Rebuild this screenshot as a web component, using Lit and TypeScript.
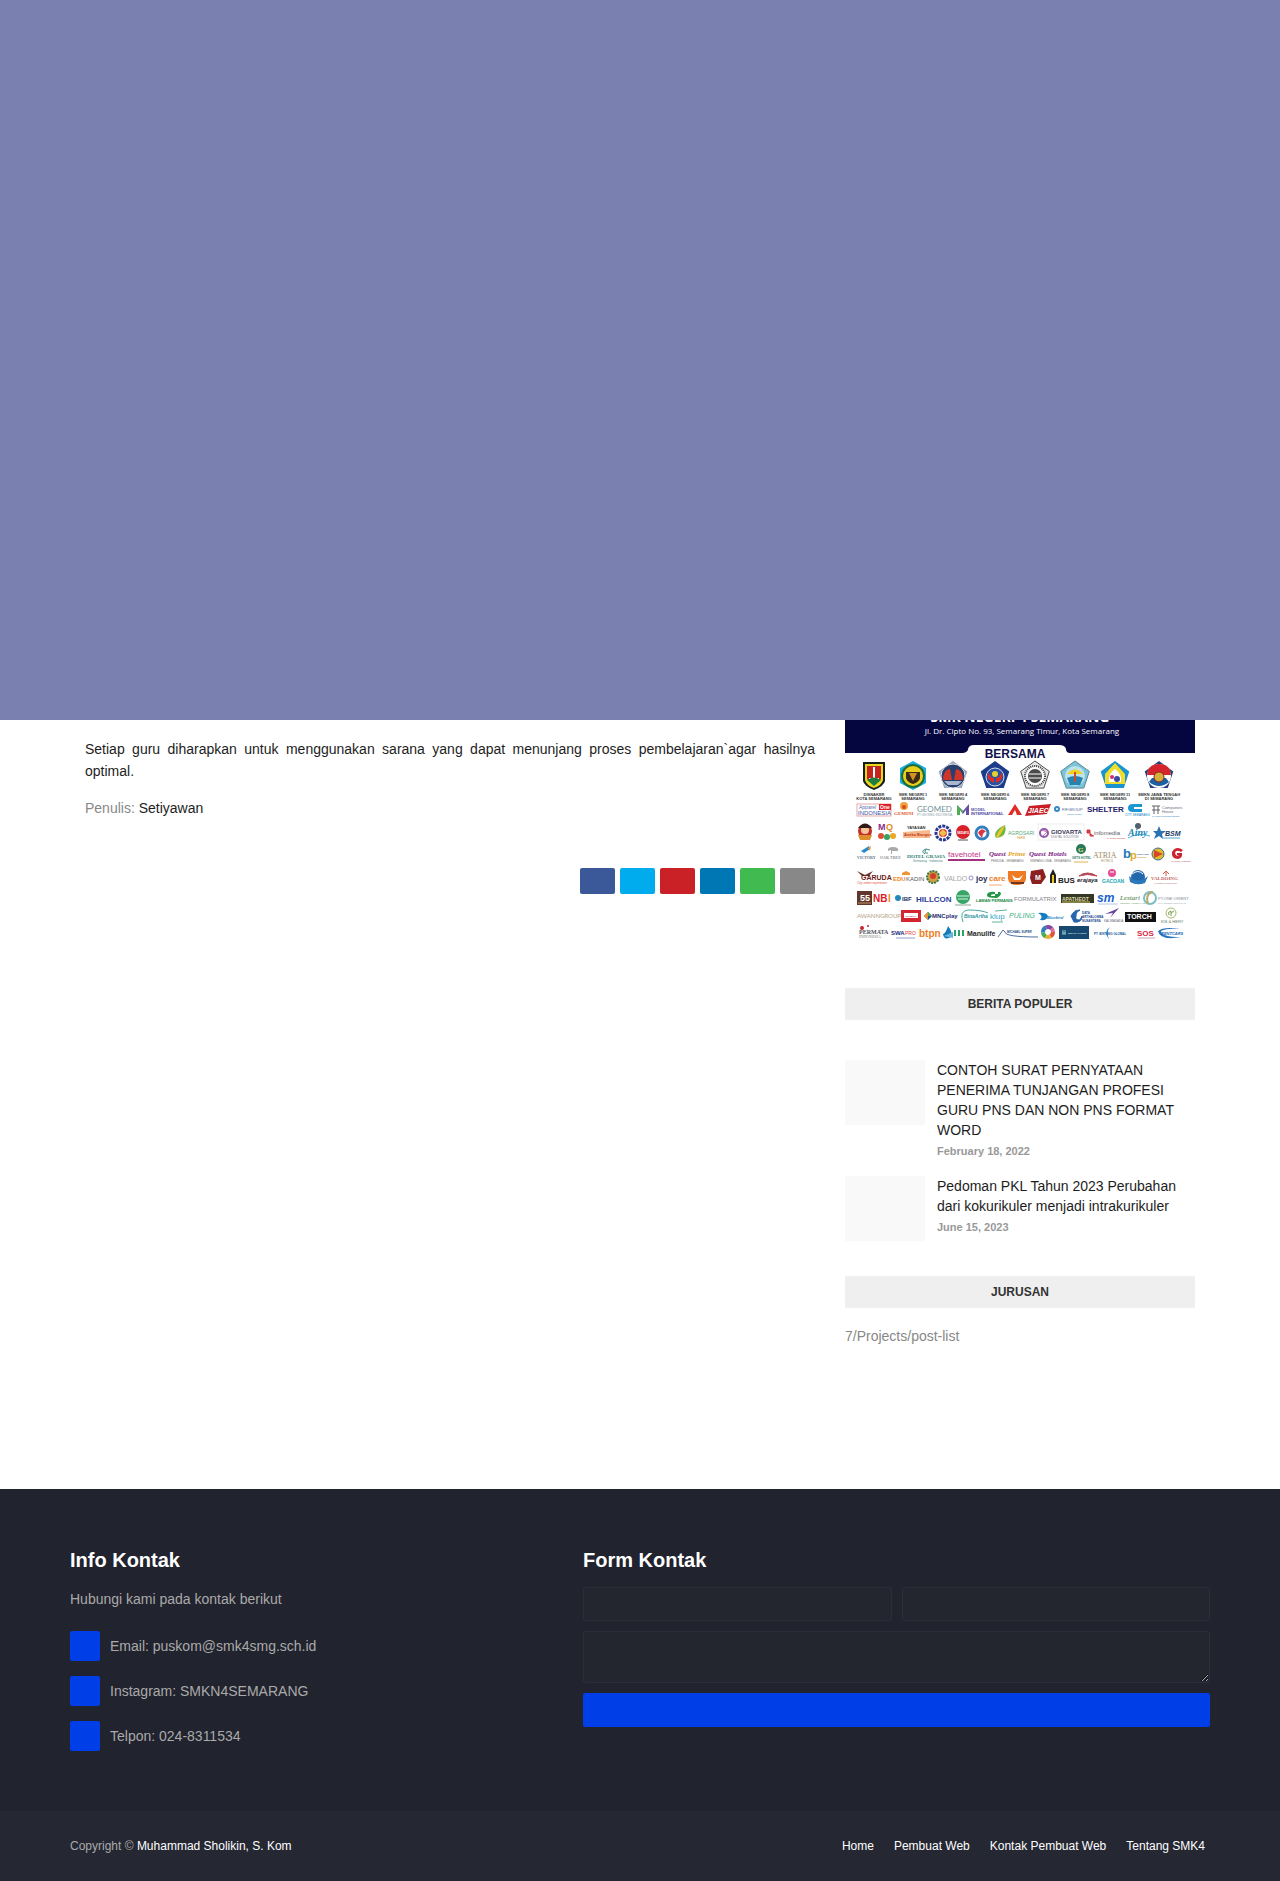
import { LitElement, html, css, svg } from "lit";
import { customElement } from "lit/decorators.js";

type Mark = [x: number, y: number, size: number, fill: string, text: string, cls?: string];

const pentagon = (cx: number, cy: number, r: number) =>
  [0, 1, 2, 3, 4]
    .map((i) => {
      const a = (i * 72 - 90) * (Math.PI / 180);
      return `${(cx + r * Math.cos(a)).toFixed(1)},${(cy + r * Math.sin(a)).toFixed(1)}`;
    })
    .join(" ");

const captions: [number, string, string][] = [
  [29, "DISNAKER", "KOTA SEMARANG"],
  [68, "SMK NEGERI 1", "SEMARANG"],
  [108, "SMK NEGERI 4", "SEMARANG"],
  [150, "SMK NEGERI 6", "SEMARANG"],
  [190, "SMK NEGERI 7", "SEMARANG"],
  [230, "SMK NEGERI 8", "SEMARANG"],
  [270, "SMK NEGERI 11", "SEMARANG"],
  [314, "SMKN JAWA TENGAH", "DI SEMARANG"],
];

const marks: Mark[] = [
  // row 1
  [14, 89, 5, "#5b6fae", "Apparel"],
  [35, 89, 5, "#ffffff", "One", "b"],
  [13, 95, 6, "#3a55a8", "INDONESIA"],
  [49, 95, 5, "#dd5b2b", "GEMINI", "s b"],
  [72, 92, 8, "#6f8f98", "GEOMED", "l"],
  [72, 96, 3, "#8fa5ab", "PT GEOMED INDONESIA"],
  [126, 91, 4, "#5d55a8", "MODEL", "b"],
  [126, 95, 4, "#4a4ba0", "INTERNATIONAL", "b"],
  [183, 93, 7, "#ffffff", "JIAEC", "b i"],
  [217, 91, 4, "#4c6795", "FIFGROUP"],
  [222, 95, 2, "#2d7fc4", "member of astra"],
  [242, 92, 8, "#27206d", "SHELTER", "b"],
  [280, 96, 3, "#1686c5", "CITY SEMARANG"],
  [317, 89, 4, "#6c7280", "Companies"],
  [317, 93, 4, "#6c7280", "House"],
  [307, 97, 2, "#2c75b9", "PT. Sarat Membangun Bangsa"],
  // row 2
  [33, 110, 9, "#8a2d8f", "M", "b"],
  [41, 110, 9, "#e08a1e", "Q", "b"],
  [62, 109, 4, "#333333", "YAYASAN", "b"],
  [59, 116, 4, "#c23b24", "Aneka Bangsa", "b"],
  [112, 114, 3, "#ffffff", "SEDAYU", "b"],
  [163, 115, 5, "#55a877", "AGROSARI"],
  [172, 119, 3, "#d9a441", "FARM"],
  [206, 114, 6, "#3a3556", "GIOVARTA", "b"],
  [206, 118, 3, "#77758a", "DIGITAL SOLUTION"],
  [249, 115, 6, "#5b5b63", "infomedia"],
  [262, 119, 2, "#cc2a2a", "by Telkom Indonesia"],
  [283, 116, 10, "#1e87b8", "Ainy", "s i b"],
  [320, 116, 7, "#1d3d66", "BSM", "b i"],
  // row 3
  [12, 139, 4, "#5d7385", "VICTORY", "s b"],
  [35, 139, 4, "#8b8f92", "OAK TREE", "s b"],
  [62, 138, 5, "#27786f", "HOTEL GRASIA", "s b"],
  [68, 142, 3, "#4f8780", "Semarang · Indonesia"],
  [103, 137, 8, "#c2348d", "favehotel"],
  [144, 136, 7, "#7a2181", "Quest", "s i b"],
  [163, 136, 7, "#e4a41f", "Prime", "s i b"],
  [146, 142, 3, "#777777", "PEMUDA - SEMARANG"],
  [184, 136, 7, "#7a2181", "Quest", "s i b"],
  [203, 136, 7, "#7a2181", "Hotels", "s i b"],
  [185, 142, 3, "#777777", "SIMPANG LIMA - SEMARANG"],
  [227, 139, 3, "#2b795f", "GETS HOTEL", "b"],
  [248, 138, 8, "#a28a63", "ATRIA", "s"],
  [256, 142, 3, "#a28a63", "HOTELS"],
  [278, 138, 13, "#1d79bd", "b", "b"],
  [285, 139, 11, "#e5a91c", "p", "b"],
  [292, 135, 2, "#3d6f9e", "Bisnis Pasar", "b"],
  [292, 138, 2, "#e0962b", "Indonesia", "b"],
  [326, 142, 2, "#c94b4b", "PT GLOBAL CENTER"],
  // row 4
  [16, 160, 7, "#6d1d1a", "GARUDA", "b"],
  [12, 164, 3, "#e04a37", "City, online experience", "i"],
  [48, 161, 6, "#ea8420", "EDU", "b"],
  [61, 161, 6, "#575757", "KADIN"],
  [99, 161, 7, "#a4a6ab", "VALDO"],
  [131, 161, 8, "#1e2a55", "joy", "b"],
  [144, 161, 8, "#ee7d27", "care", "b"],
  [190, 160, 7, "#ffffff", "M", "b"],
  [213, 163, 8, "#1a1a1a", "BUS", "b"],
  [232, 162, 6, "#1d1d2c", "erajaya", "b i"],
  [257, 163, 5, "#18a7b3", "GACOAN", "b"],
  [306, 160, 5, "#c3625d", "VALDOING", "s b"],
  [309, 164, 2, "#a56b65", "PARTNER IN SOLUTION"],
  // row 5
  [15, 181, 9, "#ffffff", "55", "b"],
  [28, 182, 10, "#df2027", "NB", "b"],
  [43, 182, 10, "#f08b23", "I", "b"],
  [57, 181, 6, "#1e3060", "IBF", "b"],
  [71, 182, 8, "#2b3d99", "HILLCON", "b"],
  [131, 182, 4, "#178a43", "LAWAN PERMANIS", "b"],
  [169, 181, 6, "#808287", "FORMULATRIX"],
  [217, 181, 5, "#dcd9a4", "APATHEOT", "b"],
  [252, 182, 12, "#1766ce", "sm", "b i"],
  [275, 180, 7, "#417b39", "Lestari", "s i"],
  [275, 184, 2, "#6b9b65", "INDONESIA FOREST LAND"],
  [313, 180, 4, "#7e8c91", "PT.ONE ORIENT"],
  [313, 184, 2, "#9aa5a8", "MANAGEMENT CONSULTANT"],
  // row 6
  [12, 198, 6, "#b4a284", "AWANNGROUP", "l"],
  [60, 197, 2, "#c93137", "ARTABOGA", "b"],
  [87, 198, 6, "#252c72", "MNCplay", "b"],
  [119, 198, 5, "#29929d", "BinaArtha", "i b"],
  [145, 199, 8, "#3aa6d0", "klup"],
  [164, 198, 7, "#40b183", "PULING", "i"],
  [202, 199, 4, "#1984c5", "Bluebird", "b i"],
  [237, 194, 3, "#1c4d91", "DATA", "b"],
  [237, 198, 3, "#1c4d91", "ARTHALOMBA", "b"],
  [237, 202, 3, "#1c4d91", "NUSANTARA", "b"],
  [259, 202, 3, "#6a6d74", "KALIMASADA"],
  [282, 199, 7, "#ffffff", "TORCH", "b"],
  [316, 203, 4, "#5d7657", "KIS & HERY"],
  // row 7
  [14, 214, 6, "#53555c", "PERMATA", "s b"],
  [14, 218, 4, "#777777", "INDONESIA", "s"],
  [46, 215, 6, "#252d80", "SWA", "b"],
  [60, 215, 5, "#df3b36", "PRO"],
  [74, 217, 10, "#ef8126", "btpn", "b"],
  [122, 216, 7, "#272727", "Manulife", "b"],
  [162, 213, 3, "#294b80", "MICHAEL SUPER", "b"],
  [223, 214, 2, "#d2e6e8", "MUTIARA GARDEN", "b"],
  [249, 215, 3, "#185f9d", "PT. BINTANG GLOBAL", "b"],
  [292, 216, 8, "#da2646", "SOS", "b"],
  [316, 215, 4, "#2065b3", "RENTCARS", "b i"],
];

const poster = svg`
  <rect width="350" height="33" fill="#05053f" />
  <path d="M118 33Q123 32 123 29Q124 25 129 25H214Q220 25 221 29Q221 33 225 33Z" fill="#fff" />
  <text class="open b" x="175" y="2" font-size="14" fill="#fff" text-anchor="middle">SMK NEGERI 4 SEMARANG</text>
  <text class="open" x="177" y="14" font-size="8" fill="#fff" text-anchor="middle">Jl. Dr. Cipto No. 93, Semarang Timur, Kota Semarang</text>
  <text class="b" x="170" y="38" font-size="12" fill="#10104a" text-anchor="middle">BERSAMA</text>

  <path d="M18 42H40V61Q39 66 29 70Q19 66 18 61Z" fill="#171d19" />
  <path d="M20 44H38V60Q37 65 29 68Q21 65 20 60Z" fill="#e8d71f" />
  <path d="M22 46H36V59L29 65L22 59Z" fill="#c5251f" />
  <path d="M28 47H30V58H34V61H24V58H28Z" fill="#fff" />
  <path d="M22 60Q29 55 36 60L29 66Z" fill="#1e7f3c" />

  <path d="M68 41L81 48V63L68 70L55 63V48Z" fill="#15afe0" />
  <circle cx="68" cy="56" r="11" fill="#e8cf1e" stroke="#226b34" stroke-width="2" />
  <path d="M61 52H75V58Q74 62 68 64Q62 62 61 58Z" fill="#3a2b18" />
  <path d="M64 53L68 61L72 53Z" fill="#d69123" />

  <polygon points=${pentagon(108, 56, 15)} fill="#9aa6b8" />
  <circle cx="108" cy="56" r="12" fill="#29406f" stroke="#dce2ea" stroke-width="1" />
  <path d="M98 60Q98 50 105 49L107 60ZM118 60Q118 50 111 49L109 60Z" fill="#cf3529" />
  <path d="M99 61H117L113 65H103Z" fill="#a9b8d0" />

  <polygon points=${pentagon(150, 56, 15)} fill="#1c3b8b" />
  <circle cx="150" cy="57" r="9" fill="#2853a3" stroke="#d9d9e7" stroke-width="1" />
  <path d="M143 52Q141 60 149 63V58Q145 58 143 52ZM157 52Q159 60 151 63V58Q155 58 157 52Z" fill="#e32b25" />
  <circle cx="150" cy="54" r="3" fill="#e6cf2c" />

  <polygon points=${pentagon(190, 56, 15)} fill="#e6e6e6" stroke="#4b4b4b" />
  <circle cx="190" cy="56" r="10" fill="#fff" stroke="#333" stroke-width="2" stroke-dasharray="1 1" />
  <circle cx="190" cy="56" r="7" fill="#4b4b4b" />
  <path d="M184 54H196M184 58H196" stroke="#fff" />

  <polygon points=${pentagon(230, 56, 15)} fill="#7bc3d8" stroke="#5a8696" />
  <circle cx="230" cy="56" r="10" fill="#bfe3ea" />
  <path d="M222 54Q230 45 238 54Z" fill="#f0d21d" />
  <path d="M222 58Q230 54 238 58L235 65H225Z" fill="#2583b4" />
  <path d="M229 52H231V62H229Z" fill="#cf4b2a" />

  <polygon points=${pentagon(270, 56, 15)} fill="#1994cf" />
  <path d="M270 43L280 54V64H260V54Z" fill="#f1dc2b" />
  <path d="M270 49Q277 54 276 62H264Q263 54 270 49Z" fill="#fff" />
  <circle cx="267" cy="57" r="2" fill="#d62a74" />
  <circle cx="272" cy="59" r="3" fill="#3a49a2" />

  <polygon points=${pentagon(314, 56, 15)} fill="#28437c" />
  <circle cx="314" cy="56" r="12" fill="#fff" />
  <path d="M302 55Q303 44 314 44Q325 44 326 55Z" fill="#d5242c" />
  <path d="M304 62Q314 70 324 62L321 58H307Z" fill="#1b62a3" />
  <circle cx="314" cy="57" r="5" fill="#d6ae3a" stroke="#8f2323" />

  <rect x="12" y="84" width="34" height="12" fill="none" stroke="#e6a9a9" />
  <rect x="34" y="84" width="12" height="6" fill="#df2026" />
  <circle cx="59" cy="86" r="4" fill="#f2a13b" /><circle cx="59" cy="87" r="2" fill="#d94823" />
  <path d="M112 95V85L118 91L124 84V95H121V90L118 94L115 90V95Z" fill="#6550a5" />
  <path d="M112 95V85L118 91V94L115 90V95Z" fill="#50ac57" />
  <path d="M163 95L170 84L177 95H172L170 90L167 95Z" fill="#e12d28" />
  <path d="M180 96L184 86L206 84L202 94Z" fill="#c71e26" />
  <circle cx="212" cy="89" r="3" fill="#3788c4" /><circle cx="212" cy="89" r="1" fill="#fff" />
  <path d="M297 84H288Q283 84 283 88Q283 92 288 92H297V89H289V87H297Z" fill="#1b95d3" />
  <path d="M307 86H315M309 86V94M313 86V94M307 90H315" stroke="#62646c" fill="none" />

  <circle cx="20" cy="111" r="7" fill="#c3302c" /><circle cx="20" cy="110" r="4" fill="#f4c49a" />
  <path d="M13 108Q20 99 27 108Z" fill="#2f1917" /><path d="M13 115H27L25 120H15Z" fill="#dd8f2d" />
  <circle cx="36" cy="116" r="3" fill="#de4f38" /><circle cx="42" cy="117" r="3" fill="#35a45b" /><circle cx="48" cy="116" r="3" fill="#e8a821" />
  <path d="M58 112L85 110V118H58Z" fill="#f6b98c" />
  <circle cx="98" cy="113" r="7" fill="#fff" stroke="#28398f" stroke-width="3" stroke-dasharray="3 1" />
  <circle cx="98" cy="113" r="4" fill="#d92e39" /><path d="M94 113L98 109L102 113L98 117Z" fill="#f0c04f" />
  <circle cx="118" cy="112" r="7" fill="#d8212b" /><path d="M113 120H123" stroke="#555" />
  <circle cx="137" cy="113" r="6" fill="#fff" stroke="#357fbe" stroke-width="3" />
  <path d="M133 113Q137 106 141 112Q138 111 137 118Z" fill="#dc3640" />
  <path d="M151 118Q147 111 160 105Q163 117 151 118Z" fill="#73b642" /><path d="M151 118Q152 111 160 105Q155 118 151 118Z" fill="#e9c72d" />
  <rect x="193" y="104" width="46" height="16" fill="none" stroke="#eee" />
  <circle cx="199" cy="113" r="4" fill="none" stroke="#8c5aa6" stroke-width="2" /><path d="M197 110L202 112L198 116" fill="none" stroke="#d06ca9" />
  <path d="M242 110H245V113H242ZM245 113V116H249" fill="#d83942" stroke="#d83942" />
  <circle cx="293" cy="106" r="3" fill="#53606f" /><path d="M283 118Q294 112 305 116" stroke="#4db6da" fill="none" />
  <path d="M314 106L316 111H321L317 114L318 119L314 116L309 119L311 114L308 111H312Z" fill="#2a72b2" /><path d="M318 118H335" stroke="#52a9d6" />

  <path d="M16 131L24 126L25 129L19 133Z" fill="#278bcb" /><path d="M23 128L26 126L25 131Z" fill="#ed9a2d" />
  <path d="M46 134V130L43 131Q42 127 48 127Q54 127 53 131L47 131V134Z" fill="#a7aaa8" />
  <path d="M80 134Q75 131 81 129Q78 134 83 133M81 129L85 130" stroke="#3b8b83" fill="none" />
  <rect x="103" y="139" width="37" height="2" fill="#a1307d" />
  <circle cx="236" cy="129" r="5" fill="#287958" /><text class="s b" x="233" y="132" font-size="7" fill="#f1db82">G</text><path d="M229 142H243" stroke="#e3b14d" />
  <circle cx="313" cy="134" r="6" fill="#e3bd27" /><path d="M309 130L318 134L309 138Z" fill="#d8452c" /><circle cx="313" cy="134" r="6" fill="none" stroke="#326c9c" />
  <path d="M338 130Q331 125 327 132Q326 139 333 139Q338 138 337 133H332V135H334Q331 137 330 133Q331 129 336 132Z" fill="#c92530" />

  <path d="M12 151L20 155L28 151L24 156H17Z" fill="#6b332b" />
  <path d="M57 153L61 151L65 153V155H57Z" fill="#ee9431" />
  <circle cx="88" cy="157" r="6" fill="#cf9f42" stroke="#397a46" stroke-width="2" stroke-dasharray="2 1" /><circle cx="88" cy="156" r="3" fill="#cf3f2c" />
  <circle cx="126" cy="158" r="2" fill="none" stroke="#9a83c7" stroke-width="1" />
  <path d="M144 165H157" stroke="#f0ab79" />
  <path d="M163 151H181V159Q180 165 172 165Q164 165 163 159Z" fill="#ef7c24" /><path d="M167 155L171 158H174L178 155L175 160H169Z" fill="#fff" /><path d="M166 163H179" stroke="#713821" stroke-width="2" />
  <path d="M186 151L198 149L201 157L196 164H187L185 158Z" fill="#8c1f22" />
  <path d="M205 163V155L208 149L211 155V163Z" fill="#222" /><path d="M207 155H209V163H207Z" fill="#edc62a" />
  <path d="M234 156Q242 150 252 156Q242 153 234 156Z" fill="#2353a0" stroke="#d63f42" />
  <circle cx="267" cy="153" r="4" fill="#e44f95" /><path d="M265 152H269" stroke="#fff" />
  <circle cx="293" cy="157" r="7" fill="#2367ac" /><path d="M284 156Q293 165 303 156L300 163Q292 166 285 162Z" fill="#2b78bd" /><path d="M287 154Q293 149 298 154" stroke="#fff" fill="none" />
  <path d="M321 156V152M318 154L321 151L324 154" stroke="#d85d4c" fill="none" />

  <rect x="12" y="171" width="15" height="14" fill="#62362a" /><path d="M13 183H26" stroke="#c29568" />
  <circle cx="53" cy="178" r="3" fill="#2588bd" />
  <circle cx="118" cy="177" r="7" fill="#36a566" /><path d="M112 176H124M113 179H123" stroke="#d8f0df" /><path d="M110 185H126" stroke="#8ca590" />
  <path d="M152 178Q141 178 142 175Q143 171 150 172V174Q145 174 146 176H150V174H153Q152 171 155 172Q158 174 152 178Z" fill="#219746" />
  <rect x="216" y="174" width="33" height="9" fill="#353827" /><path d="M217 182H245" stroke="#d3c963" />
  <path d="M253 184H273" stroke="#b1cae4" />
  <circle cx="305" cy="178" r="6" fill="none" stroke="#7bbfc6" stroke-width="2" /><path d="M308 172Q300 173 303 184" stroke="#b7a968" fill="none" stroke-width="2" />

  <rect x="56" y="190" width="20" height="12" fill="#d32630" /><rect x="59" y="193" width="14" height="5" fill="#fff" />
  <path d="M79 196L83 192L87 196L83 200Z" fill="#1c529c" /><path d="M79 196L83 192V200Z" fill="#ed932a" /><path d="M83 192L87 196H83Z" fill="#5ba644" />
  <path d="M123 190Q114 191 118 202M123 190Q137 190 143 193" stroke="#45a7a5" fill="none" />
  <path d="M150 191L162 190M147 202H158" stroke="#62b69a" />
  <path d="M193 193Q201 192 203 196Q202 201 195 200Q199 196 193 193Z" fill="#147dc0" />
  <path d="M226 196Q229 190 235 190Q229 193 231 199Q235 202 237 196Q237 203 229 202ZM231 190V197" fill="#2665ad" stroke="#2665ad" />
  <path d="M260 194L274 188L265 198L268 193Z" fill="#67459b" />
  <rect x="280" y="192" width="31" height="10" fill="#101010" />
  <circle cx="326" cy="193" r="5" fill="none" stroke="#a5ba69" /><path d="M326 196V191Q322 192 324 195M326 193L329 191" stroke="#7e9d4e" fill="none" />

  <circle cx="17" cy="208" r="2" fill="#c52630" /><circle cx="23" cy="206" r="1" fill="#c52630" />
  <path d="M51 218H70" stroke="#92a3cd" />
  <path d="M103 206Q108 212 106 217Q99 221 98 214Q101 213 103 206Z" fill="#187bb8" /><path d="M99 216L108 212V218Z" fill="#64b7df" />
  <path d="M109 210H111V216H109ZM113 210H115V216H113ZM117 210H119V216H117Z" fill="#28a16b" />
  <path d="M153 217L158 210L160 212Q160 217 193 217" stroke="#4c6f9e" fill="none" />
  <circle cx="203" cy="212" r="5" fill="none" stroke="#e0523d" stroke-width="4" stroke-dasharray="5 27" />
  <circle cx="203" cy="212" r="5" fill="none" stroke="#eab22c" stroke-width="4" stroke-dasharray="5 27" stroke-dashoffset="-5" />
  <circle cx="203" cy="212" r="5" fill="none" stroke="#4cad56" stroke-width="4" stroke-dasharray="5 27" stroke-dashoffset="-10" />
  <circle cx="203" cy="212" r="5" fill="none" stroke="#2f7ec0" stroke-width="4" stroke-dasharray="6 26" stroke-dashoffset="-15" />
  <circle cx="203" cy="212" r="5" fill="none" stroke="#85479d" stroke-width="4" stroke-dasharray="6 26" stroke-dashoffset="-21" />
  <circle cx="203" cy="212" r="5" fill="none" stroke="#e06c9b" stroke-width="4" stroke-dasharray="5 27" stroke-dashoffset="-27" />
  <rect x="214" y="206" width="30" height="13" fill="#17486f" /><path d="M218 210V215M220 210V215M217 213H221" stroke="#8bc4cf" />
  <path d="M265 207Q258 212 264 219Q261 212 265 207Z" fill="#338bc8" />
  <path d="M293 218H310" stroke="#caa0aa" />
  <path d="M313 211Q319 206 335 209Q322 208 316 211Q316 217 336 217Q315 221 313 211Z" fill="#2875c0" />

  ${captions.map(
    ([x, a, b]) => svg`
      <text x=${x} y="76" font-size="4" class="b" text-anchor="middle" fill="#333">${a}</text>
      <text x=${x} y="80" font-size="4" class="b" text-anchor="middle" fill="#333">${b}</text>`,
  )}
  ${marks.map(
    ([x, y, size, fill, text, cls]) =>
      svg`<text x=${x} y=${y} font-size=${size} fill=${fill} class=${cls ?? ""}>${text}</text>`,
  )}
`;

@customElement("partner-poster")
export class PartnerPoster extends LitElement {
  static styles = css`
    :host { display: block; }
    .poster { display: block; width: 100%; height: auto; overflow: hidden; font-family: "Liberation Sans", Arial, sans-serif; }
    .b { font-weight: 700; }
    .i { font-style: italic; }
    .l { font-family: Lato, sans-serif; }
    .s { font-family: "Liberation Serif", serif; }
    .open { font-family: "Open Sans", sans-serif; }
  `;
  render() {
    return html`<svg class="poster" viewBox="0 0 350 230" role="img" aria-label="SMK Negeri 4 Semarang bersama mitra">${poster}</svg>`;
  }
}

const shares = [
  ["facebook", "Facebook"],
  ["twitter", "Twitter"],
  ["pinterest", "Pinterest"],
  ["linkedin", "LinkedIn"],
  ["whatsapp", "WhatsApp"],
  ["email", "Email"],
];

const posts = [
  ["CONTOH SURAT PERNYATAAN PENERIMA TUNJANGAN PROFESI GURU PNS DAN NON PNS FORMAT WORD", "February 18, 2022"],
  ["Pedoman PKL Tahun 2023 Perubahan dari kokurikuler menjadi intrakurikuler", "June 15, 2023"],
];

const contacts = ["Email: puskom@smk4smg.sch.id", "Instagram: SMKN4SEMARANG", "Telpon: 024-8311534"];
const menu = ["Home", "Pembuat Web", "Kontak Pembuat Web", "Tentang SMK4"];

@customElement("app-root")
export class AppRoot extends LitElement {
  static styles = css`
    :host {
      display: block;
      background: #fff;
      color: #888;
      font: 14px/20px "Liberation Sans", Arial, sans-serif;
    }
    * { box-sizing: border-box; }
    h2, h3, p, ul { margin: 0; padding: 0; }
    ul { list-style: none; }
    a { color: inherit; text-decoration: none; }
    .cover { height: 720px; background: #7a81b1; }
    .wrap { max-width: 1140px; margin: 0 auto; }
    .content {
      display: grid;
      grid-template-columns: minmax(0, 1fr) 350px;
      gap: 30px;
      padding: 0 15px 143px;
    }
    .article { padding-top: 18px; line-height: 22px; }
    .body { color: #1d1d1d; text-align: justify; margin-bottom: 15px; }
    .author { color: #1d1d1d; }
    .share { display: flex; justify-content: flex-end; gap: 5px; margin-top: 49px; }
    .share-link { display: block; width: 35px; height: 26px; border-radius: 2px; }
    .facebook { background: #3b5999; }
    .twitter { background: #00acee; }
    .pinterest { background: #ca2127; }
    .linkedin { background: #0077b5; }
    .whatsapp { background: #41bb50; }
    .email { background: #888; }
    .bar {
      background: #efefef;
      color: #333;
      font-size: 12px;
      line-height: 32px;
      text-align: center;
    }
    .popular-bar { margin-top: 38px; }
    .posts { display: grid; gap: 17px; margin: 40px 0 35px; }
    .post { display: grid; grid-template-columns: 80px minmax(0, 1fr); gap: 12px; align-items: start; }
    .thumb { height: 65px; background: #f9f9f9; }
    .post-title { font-size: 14px; font-weight: 400; color: #1d1d1d; }
    .date { display: block; margin-top: 3px; font-size: 11px; line-height: 16px; font-weight: 700; color: #999; }
    .majors { margin-top: 18px; }
    .footer { background: #21232e; color: #aaa; }
    .contact { display: grid; grid-template-columns: 45% 55%; padding: 60px 0; }
    .heading { font-size: 20px; line-height: 22px; color: #fff; }
    .intro { margin: 18px 0 22px; }
    .contact-list { display: grid; gap: 15px; }
    .contact-item { display: flex; align-items: center; gap: 10px; }
    .square { width: 30px; height: 30px; border-radius: 2px; background: #003fe8; }
    .form { display: grid; grid-template-columns: 1fr 1fr; gap: 10px; margin-top: 16px; }
    .field {
      display: block;
      width: 100%;
      height: 34px;
      padding: 5px 10px;
      border: 1px solid #2b2d38;
      border-radius: 2px;
      background: #23252f;
      color: #fff;
      font: inherit;
      outline: none;
    }
    .full { grid-column: 1 / -1; }
    .message { height: 52px; resize: vertical; }
    .send { height: 34px; border: 0; border-radius: 2px; background: #003fe8; }
    .bottom { background: #252733; font-size: 12px; }
    .bottom-row { display: flex; justify-content: space-between; align-items: center; padding: 25px 0; }
    .owner, .menu { color: #fff; }
    .menu { display: flex; gap: 20px; padding-right: 5px; }
  `;

  render() {
    return html`
      <div class="cover"></div>
      <main class="wrap content">
        <article class="article">
          <p class="body">Setiap guru diharapkan untuk menggunakan sarana yang dapat menunjang proses pembelajaran\`agar hasilnya optimal.</p>
          <p>Penulis: <span class="author">Setiyawan</span></p>
          <div class="share">
            ${shares.map(([cls, name]) => html`<a class="share-link ${cls}" href="#" aria-label=${name}></a>`)}
          </div>
        </article>
        <aside>
          <partner-poster></partner-poster>
          <h3 class="bar popular-bar">BERITA POPULER</h3>
          <div class="posts">
            ${posts.map(
              ([title, date]) => html`
                <div class="post">
                  <div class="thumb"></div>
                  <div>
                    <h2 class="post-title"><a href="#">${title}</a></h2>
                    <time class="date">${date}</time>
                  </div>
                </div>`,
            )}
          </div>
          <h3 class="bar">JURUSAN</h3>
          <p class="majors">7/Projects/post-list</p>
        </aside>
      </main>
      <footer class="footer">
        <div class="wrap contact">
          <section>
            <h3 class="heading">Info Kontak</h3>
            <p class="intro">Hubungi kami pada kontak berikut</p>
            <ul class="contact-list">
              ${contacts.map((c) => html`<li class="contact-item"><span class="square"></span><span>${c}</span></li>`)}
            </ul>
          </section>
          <section>
            <h3 class="heading">Form Kontak</h3>
            <form class="form" @submit=${(e: Event) => e.preventDefault()}>
              <input class="field" type="text" aria-label="Nama" />
              <input class="field" type="email" aria-label="Email" />
              <textarea class="field message full" aria-label="Pesan"></textarea>
              <button class="send full" type="submit" aria-label="Kirim"></button>
            </form>
          </section>
        </div>
        <div class="bottom">
          <div class="wrap bottom-row">
            <div>Copyright © <a class="owner" href="#">Muhammad Sholikin, S. Kom</a></div>
            <nav class="menu">${menu.map((m) => html`<a href="#">${m}</a>`)}</nav>
          </div>
        </div>
      </footer>
    `;
  }
}
